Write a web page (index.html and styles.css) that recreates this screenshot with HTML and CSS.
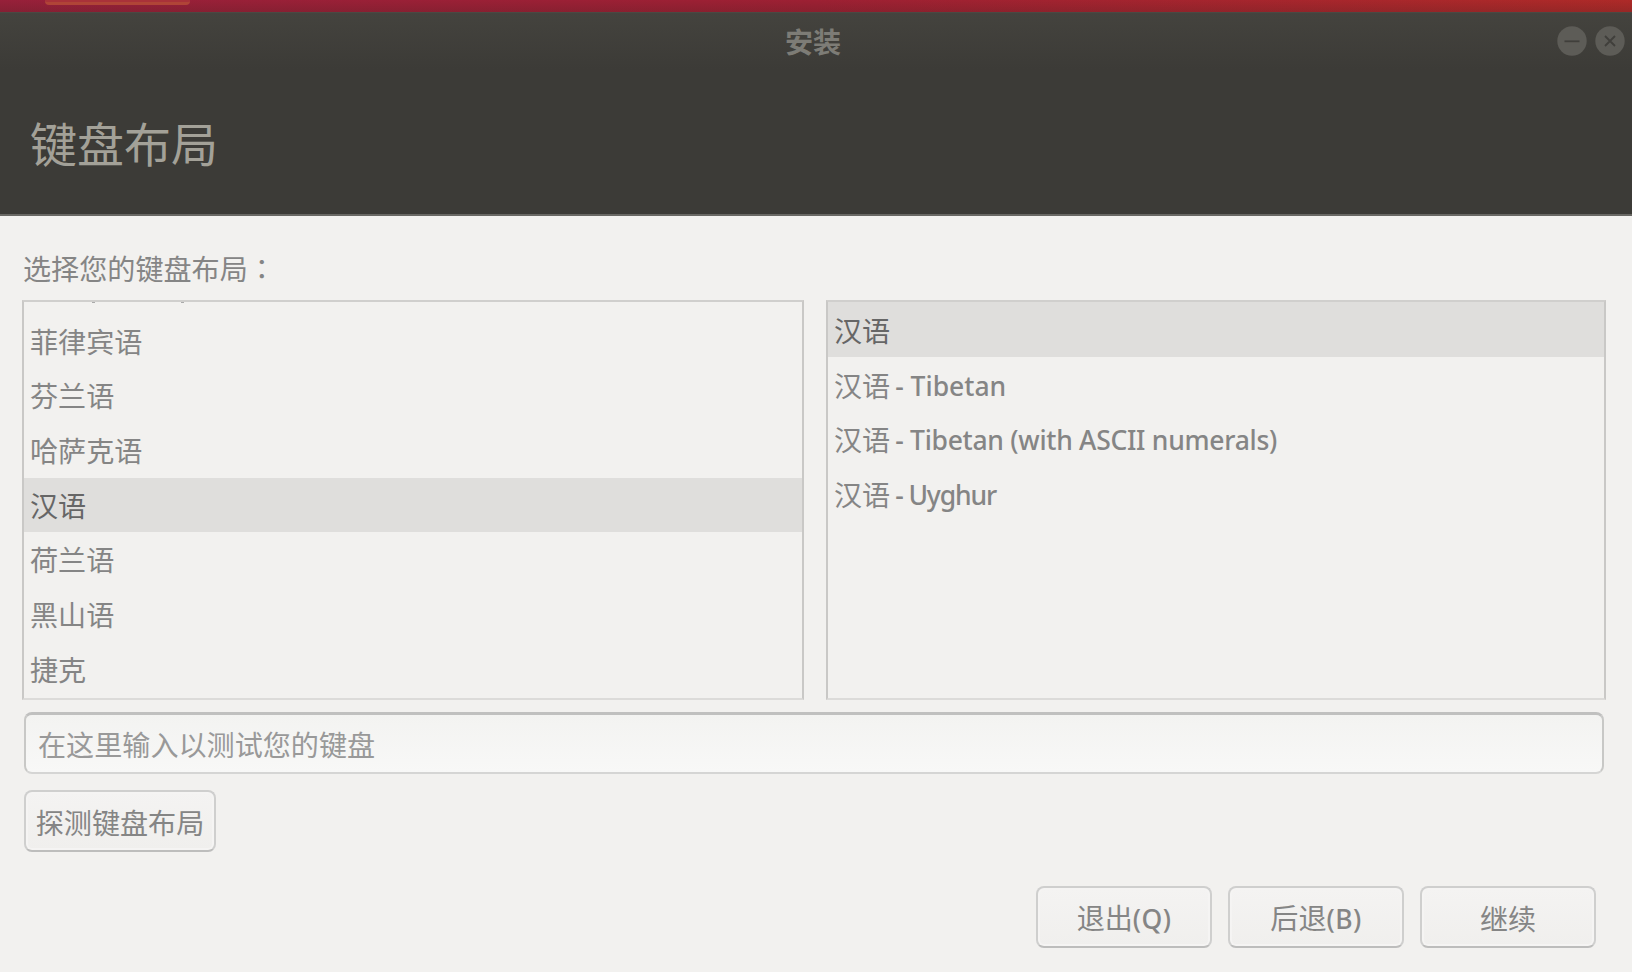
FILE: index.html
```html
<!DOCTYPE html>
<html lang="zh-CN">
<head>
<meta charset="utf-8">
<title>安装</title>
<link rel="stylesheet" href="styles.css">
</head>
<body>
<div class="desktop"><i class="launcher-edge"></i></div>
<main class="window">
  <header class="header">
    <div class="titlebar">
      <span class="title">安装</span>
      <div class="controls">
        <svg class="control" viewBox="0 0 30 30"><circle cx="15" cy="15" r="14.7"/><path d="M7.5 15.3H22.5"/></svg>
        <svg class="control" viewBox="0 0 30 30"><circle cx="15" cy="15" r="14.7"/><path d="M10 10L20 20M20 10L10 20"/></svg>
      </div>
    </div>
    <h1 class="heading">键盘布局</h1>
  </header>
  <section class="content">
    <label class="prompt">选择您的键盘布局<span class="colon" lang="zh-TW">：</span></label>
    <div class="lists">
      <ul class="list list-scrolled">
        <li class="row row-cut"><i class="speck"></i><i class="speck"></i></li>
        <li class="row">菲律宾语</li>
        <li class="row">芬兰语</li>
        <li class="row">哈萨克语</li>
        <li class="row selected">汉语</li>
        <li class="row">荷兰语</li>
        <li class="row">黑山语</li>
        <li class="row">捷克</li>
      </ul>
      <ul class="list">
        <li class="row selected">汉语</li>
        <li class="row">汉语<span class="latin wide">- Tibetan</span></li>
        <li class="row">汉语<span class="latin">- Tibetan (with ASCII numerals)</span></li>
        <li class="row">汉语<span class="latin tight">- Uyghur</span></li>
      </ul>
    </div>
    <input class="entry" type="text" placeholder="在这里输入以测试您的键盘">
    <button class="button detect">探测键盘布局</button>
    <footer class="actions">
      <button class="button">退出<span class="key">(Q)</span></button>
      <button class="button">后退<span class="key">(B)</span></button>
      <button class="button">继续</button>
    </footer>
  </section>
</main>
</body>
</html>
```
FILE: styles.css
```css
* { box-sizing: border-box; }
body {
  margin: 0;
  width: 1632px;
  height: 972px;
  overflow: hidden;
  display: flex;
  flex-direction: column;
  background: #f2f1ef;
  color: #858585;
  font: 28.1px/40px "Noto Sans CJK SC", sans-serif;
}
.desktop {
  height: 12px;
  flex: none;
  padding-left: 45px;
  background: linear-gradient(180deg, transparent, rgba(70, 30, 30, .22)), linear-gradient(90deg, #97203a, #9d2033 50%, #ae2a28);
}
.launcher-edge {
  display: block;
  width: 145px;
  height: 5px;
  border-bottom: 3px solid #b04437;
  border-radius: 0 0 4px 4px;
  background: #a93239;
}
.window { flex: 1; display: flex; flex-direction: column; }
.header {
  height: 204px;
  flex: none;
  border-top: 1px solid #4a4943;
  border-bottom: 2px solid #696864;
  background: linear-gradient(180deg, #44433e, #3c3b37 56px);
}
.titlebar {
  height: 56px;
  display: grid;
  grid-template-columns: 1fr auto 1fr;
  align-items: center;
  padding: 0 7px 0 2px;
}
.title { grid-column: 2; padding: 0 1px 1px 0; color: #7d7c76; font-weight: 700; }
.controls { display: flex; gap: 8px; justify-content: flex-end; }
.control { width: 30px; height: 30px; display: block; }
.control circle { fill: #5d5c57; }
.control path { fill: none; stroke: #403f3b; stroke-width: 1.8; }
.heading {
  margin: 38px 0 0 30px;
  color: #a3a198;
  font-size: 47px;
  line-height: 70px;
  font-weight: 400;
}
.content { padding: 32px 26px 0 22px; display: flex; flex-direction: column; }
.prompt { height: 52px; padding-left: 1px; }
.colon { font-family: "Noto Sans CJK TC", sans-serif; }
.lists { display: grid; grid-template-columns: 782px 780px; gap: 22px; height: 400px; }
.list {
  list-style: none;
  margin: 0;
  padding: 0;
  overflow: hidden;
  border: 2px solid #c9c8c6;
  border-top-color: #d0cfcd;
  border-bottom-color: #dcdbd9;
}
.row { height: 54.7px; padding-left: 6px; line-height: 55px; display: flex; white-space: nowrap; }
.list-scrolled .row { line-height: 54px; }
.list-scrolled .row-cut { height: 11.5px; padding-left: 68px; gap: 86px; }
.speck { width: 3px; height: 1px; background: #aaa; }
.selected { background: #dfdedc; color: #666; }
.latin, .key { font-family: "Noto Sans", sans-serif; font-size: 26.5px; font-weight: 500; }
.latin { padding-left: 5px; line-height: 59px; letter-spacing: -.28px; }
.wide { letter-spacing: 0; }
.tight { letter-spacing: -1.1px; }
.key { letter-spacing: .4px; }
.entry {
  height: 62px;
  margin: 12px 2px 0;
  padding: 0 0 1px 12px;
  border: 2px solid #c8c8c6;
  border-top: 3px solid #c0c0bf;
  border-bottom-color: #d5d5d4;
  border-radius: 8px;
  background: linear-gradient(#f3f3f1, #f8f8f7);
  font: inherit;
}
.entry::placeholder { color: #999; opacity: 1; }
.button {
  width: 176px;
  height: 62px;
  padding: 2px 0 0;
  border: 2px solid #cfcfce;
  border-bottom-color: #bdbdbc;
  border-radius: 8px;
  background: linear-gradient(#f4f3f2, #f0efed);
  box-shadow: inset 0 0 0 2px #f5f4f3;
  color: inherit;
  font: inherit;
}
.detect { width: 192px; margin: 16px 0 0 2px; }
.actions { display: flex; justify-content: flex-end; gap: 16px; padding: 34px 10px 0 0; }
```
